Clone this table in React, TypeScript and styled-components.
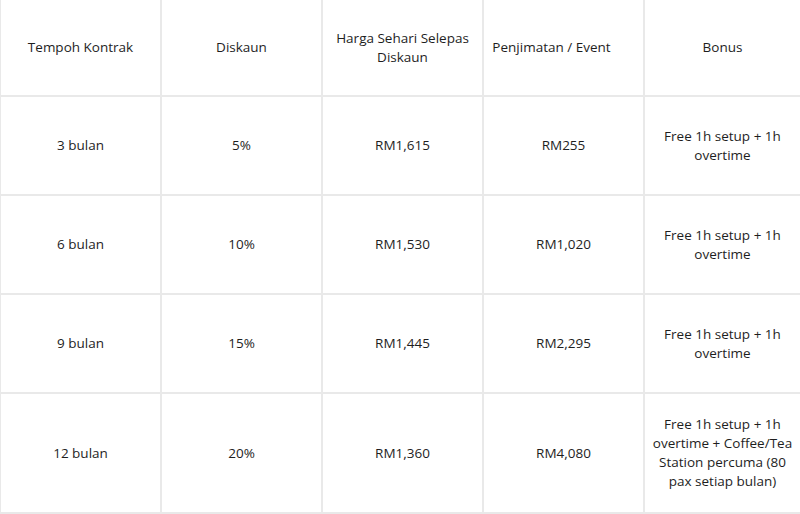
import React from "react";
import styled, { createGlobalStyle } from "styled-components";

const Global = createGlobalStyle`
  html, body { margin: 0; padding: 0; background: #ffffff; }
  body { font-family: "Open Sans", "Noto Sans", sans-serif; }
`;

const Grid = styled.div`
  width: 800px;
  height: 514px;
  box-sizing: border-box;
  display: grid;
  grid-template-columns: 159px 159px 159px 159px 1fr;
  grid-template-rows: 95px 97px 97px 97px 118px;
  gap: 2px;
  padding: 0 0 2px 1px;
  background: #e9e9e9;
  overflow: hidden;
`;

const Cell = styled.div<{ $shift?: number }>`
  background: #ffffff;
  display: flex;
  align-items: center;
  justify-content: center;
  text-align: center;
  padding: 0 ${(p) => 5 + (p.$shift ?? 0)}px 0 5px;
  box-sizing: border-box;
  font-size: 13.5px;
  line-height: 19px;
  color: #1e1e1e;
`;

const headers: [string, number][] = [
  ["Tempoh Kontrak", 0],
  ["Diskaun", 0],
  ["Harga Sehari Selepas Diskaun", 0],
  ["Penjimatan / Event", 24],
  ["Bonus", 0],
];
const rows = [
  ["3 bulan", "5%", "RM1,615", "RM255", "Free 1h setup + 1h overtime"],
  ["6 bulan", "10%", "RM1,530", "RM1,020", "Free 1h setup + 1h overtime"],
  ["9 bulan", "15%", "RM1,445", "RM2,295", "Free 1h setup + 1h overtime"],
  ["12 bulan", "20%", "RM1,360", "RM4,080", "Free 1h setup + 1h overtime + Coffee/Tea Station percuma (80 pax setiap bulan)"],
];

export default function App() {
  return (
    <>
      <Global />
      <Grid>
        {headers.map(([h, s]) => (
          <Cell key={h} $shift={s}>{h}</Cell>
        ))}
        {rows.map((r, i) => r.map((c, j) => <Cell key={`${i}-${j}`}>{c}</Cell>))}
      </Grid>
    </>
  );
}
